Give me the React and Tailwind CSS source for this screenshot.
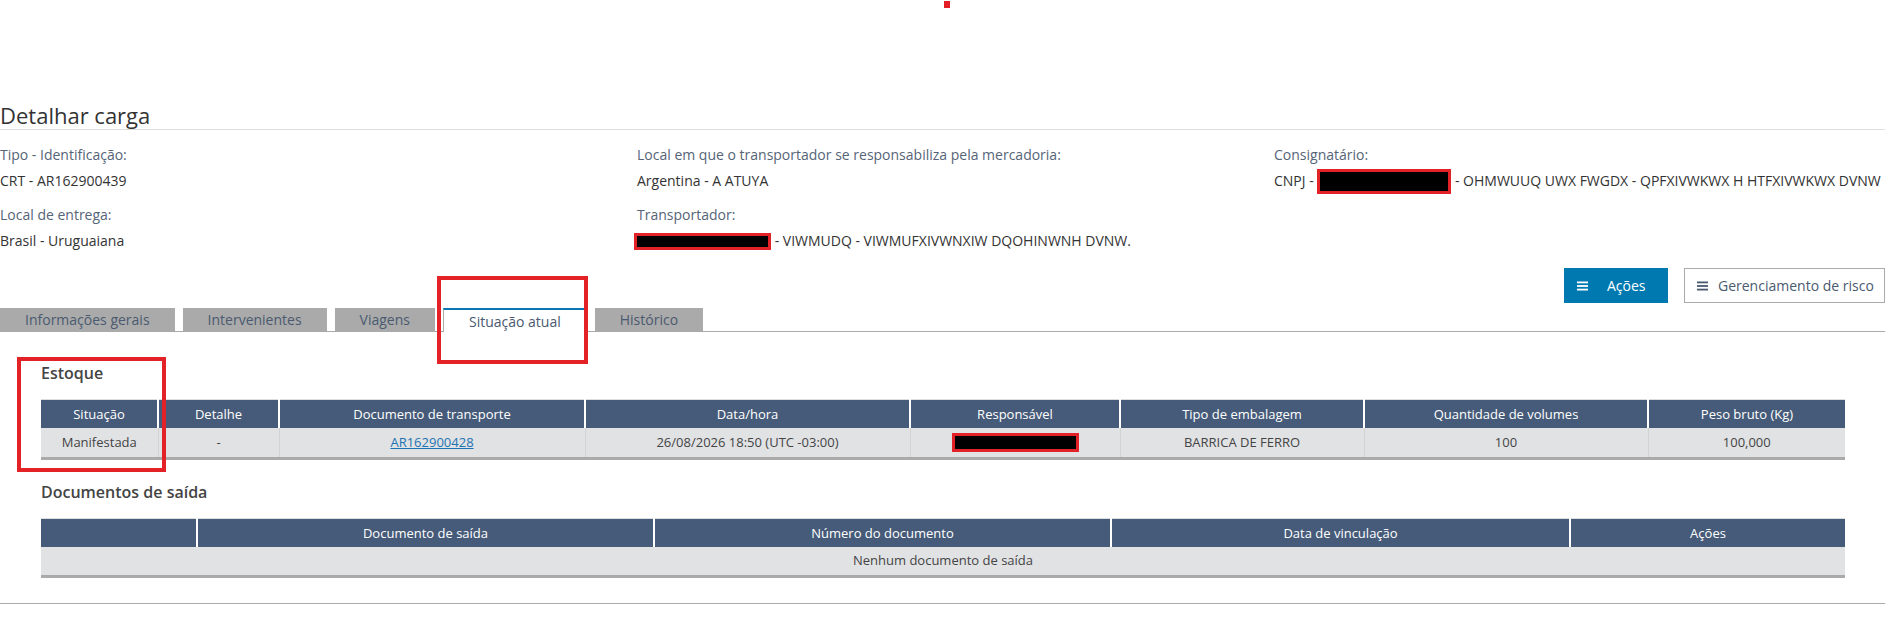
import React from "react";

const RED = "border-[#e32228]";

function Redacted({ w, h, className = "" }) {
  return (
    <span
      className={`inline-block shrink-0 border-[3px] ${RED} bg-black ${className}`}
      style={{ width: w, height: h }}
    />
  );
}

function MenuGlyph({ color }) {
  return (
    <svg width="12" height="10" viewBox="0 0 12 10" className="shrink-0">
      <rect x="0" y="0.5" width="11" height="1.8" fill={color} />
      <rect x="0" y="4.1" width="11" height="1.8" fill={color} />
      <rect x="0" y="7.7" width="11" height="1.8" fill={color} />
    </svg>
  );
}

function Field({ label, children }) {
  return (
    <div>
      <div className="text-[14px] leading-[20px] text-[#566477]">{label}</div>
      <div className="mt-[6px] flex h-[20px] items-center whitespace-nowrap text-[14px] leading-[20px] text-[#333]">
        {children}
      </div>
    </div>
  );
}

const tabs = [
  { label: "Informações gerais" },
  { label: "Intervenientes" },
  { label: "Viagens" },
  { label: "Situação atual", active: true },
  { label: "Histórico" },
];

const stockCols = [
  ["Situação", 117],
  ["Detalhe", 121],
  ["Documento de transporte", 306],
  ["Data/hora", 325],
  ["Responsável", 210],
  ["Tipo de embalagem", 244],
  ["Quantidade de volumes", 284],
  ["Peso bruto (Kg)", 197],
];

const exitCols = [
  ["", 156],
  ["Documento de saída", 457],
  ["Número do documento", 457],
  ["Data de vinculação", 459],
  ["Ações", 275],
];

function HeadRow({ cols }) {
  return (
    <tr>
      {cols.map(([name], i) => (
        <th
          key={i}
          className={`h-[28px] bg-[#465b79] p-0 text-center text-[13px] font-normal leading-[18px] text-white ${
            i > 0 ? "border-l-2 border-white" : ""
          }`}
        >
          {name}
        </th>
      ))}
    </tr>
  );
}

function ColGroup({ cols }) {
  return (
    <colgroup>
      {cols.map(([, w], i) => (
        <col key={i} style={{ width: w }} />
      ))}
    </colgroup>
  );
}

export default function App() {
  return (
    <div className="relative h-[617px] w-[1893px] overflow-hidden bg-white font-['Open_Sans',sans-serif] text-[#333]">
      {/* top marker */}
      <div className="flex h-[101px] justify-center">
        <div className="mt-[1px] h-[7px] w-[6px] bg-[#e31e24]" />
      </div>

      <div className="pr-[8px]">
        <h1 className="border-b border-[#dedede] text-[22px] font-normal leading-[28px] text-[#333]">
          Detalhar carga
        </h1>

        {/* cargo identification */}
        <div className="mt-[15px] grid grid-cols-[637px_637px_1fr] gap-y-[14px]">
          <Field label="Tipo - Identificação:">CRT - AR162900439</Field>
          <Field label="Local em que o transportador se responsabiliza pela mercadoria:">
            Argentina - A ATUYA
          </Field>
          <Field label="Consignatário:">
            <span>CNPJ -&nbsp;</span>
            <Redacted w={134} h={25} />
            <span>&nbsp;- OHMWUUQ UWX FWGDX - QPFXIVWKWX H HTFXIVWKWX DVNW</span>
          </Field>
          <Field label="Local de entrega:">Brasil - Uruguaiana</Field>
          <Field label="Transportador:">
            <Redacted w={137} h={17} className="-ml-[3px]" />
            <span>&nbsp;- VIWMUDQ - VIWMUFXIVWNXIW DQOHINWNH DVNW.</span>
          </Field>
        </div>

        {/* actions */}
        <div className="mt-[17px] flex h-[35px] justify-end gap-[16px]">
          <button className="flex h-[35px] w-[104px] items-center bg-[#0079b0] pl-[13px] text-[14px] text-white">
            <MenuGlyph color="#ffffff" />
            <span className="ml-[18px]">Ações</span>
          </button>
          <button className="flex h-[35px] w-[201px] items-center border border-[#aaaaaa] bg-white pl-[12px] text-[14px] text-[#4a5a70]">
            <MenuGlyph color="#4a5a70" />
            <span className="ml-[9px]">Gerenciamento de risco</span>
          </button>
        </div>

        {/* tabs */}
        <div className="mt-[5px] flex h-[24px] items-end gap-[8px] border-b border-[#aaaaaa]">
          {tabs.map((t) =>
            t.active ? (
              <div
                key={t.label}
                className="-mb-px flex h-[24px] items-center border-x border-t-2 border-x-[#aaaaaa] border-t-[#0a78b0] bg-white px-[25px] text-[14px] text-[#4a5a70]"
              >
                {t.label}
              </div>
            ) : (
              <div
                key={t.label}
                className="flex h-[23px] items-center bg-[#aaaaaa] px-[25px] text-[14px] text-[#4a5a70]"
              >
                {t.label}
              </div>
            )
          )}
        </div>

        {/* stock */}
        <div className="px-[41px] pt-[30px]">
          <h2 className="text-[16px] font-semibold leading-[22px] text-[#444]">Estoque</h2>
          <table className="mt-[15px] w-[1804px] table-fixed border-collapse border-t border-[#dddddd]">
            <ColGroup cols={stockCols} />
            <thead>
              <HeadRow cols={stockCols} />
            </thead>
            <tbody>
              <tr className="border-b-[3px] border-[#aaaaaa] bg-[#e1e2e4] text-center text-[13px] text-[#444]">
                <td className="h-[31px] p-0">Manifestada</td>
                <td className="border-l border-[#d2d3d5] p-0">-</td>
                <td className="border-l border-[#d2d3d5] p-0">
                  <span className="text-[#1d74b2] underline">AR162900428</span>
                </td>
                <td className="border-l border-[#d2d3d5] p-0">26/08/2026 18:50 (UTC -03:00)</td>
                <td className="border-l border-[#d2d3d5] p-0">
                  <div className="flex justify-center">
                    <Redacted w={127} h={19} />
                  </div>
                </td>
                <td className="border-l border-[#d2d3d5] p-0">BARRICA DE FERRO</td>
                <td className="border-l border-[#d2d3d5] p-0">100</td>
                <td className="border-l border-[#d2d3d5] p-0">100,000</td>
              </tr>
            </tbody>
          </table>

          <h2 className="mt-[21px] text-[16px] font-semibold leading-[22px] text-[#444]">
            Documentos de saída
          </h2>
          <table className="mt-[15px] w-[1804px] table-fixed border-collapse border-t border-[#dddddd]">
            <ColGroup cols={exitCols} />
            <thead>
              <HeadRow cols={exitCols} />
            </thead>
            <tbody>
              <tr className="border-b-[3px] border-[#aaaaaa] bg-[#e1e2e4] text-center text-[13px] text-[#444]">
                <td colSpan={5} className="h-[30px] p-0">
                  Nenhum documento de saída
                </td>
              </tr>
            </tbody>
          </table>
        </div>

        <div className="mt-[25px] border-t border-[#aaaaaa]" />
      </div>

      {/* highlight frames */}
      <div className={`pointer-events-none absolute left-[437px] top-[276px] h-[88px] w-[151px] border-4 ${RED}`} />
      <div className={`pointer-events-none absolute left-[17px] top-[357px] h-[115px] w-[149px] border-4 ${RED}`} />
    </div>
  );
}
